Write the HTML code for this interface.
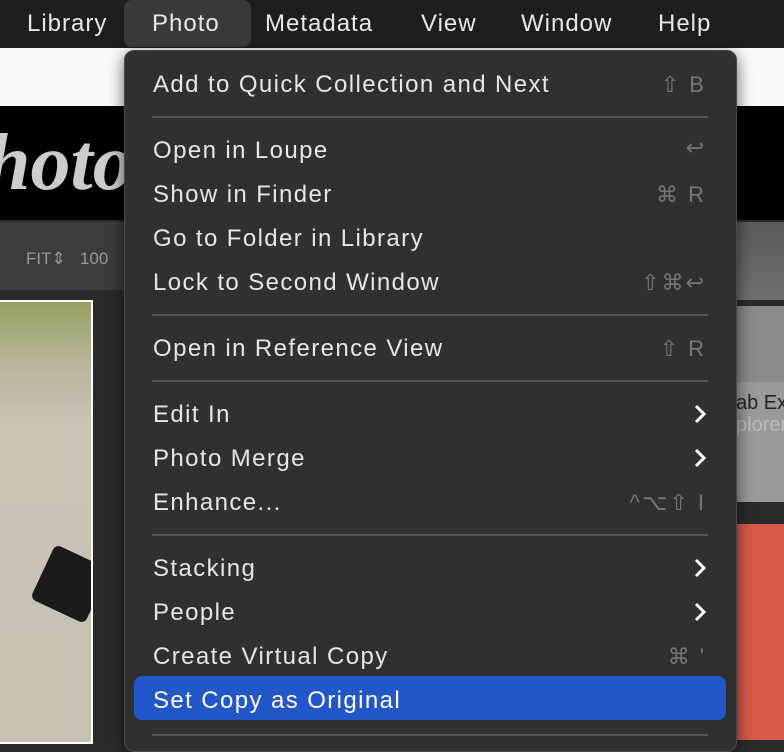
<!DOCTYPE html><html><head><style>
body{margin:0;width:784px;height:740px;overflow:hidden;background:#2b2b2b;font-family:"Liberation Sans",sans-serif;position:relative}
.a{position:absolute}
.mb{left:0;top:0;width:784px;height:48px;background:#1e1e1e;color:#e8e8e8;font-size:24px;letter-spacing:1px}
.mb span{position:absolute;top:10px}
.menu{left:124px;top:50px;width:611px;height:700px;background:#303030;border:1px solid #4a4a4a;border-radius:10px;box-shadow:0 4px 16px rgba(0,0,0,.6)}
.it{position:absolute;left:28px;font-size:24px;color:#e6e6e6;letter-spacing:1.4px;white-space:nowrap}
.sc{position:absolute;right:30px;font-size:22px;color:#777;letter-spacing:2px}
.ar{position:absolute;right:30px;width:12px;height:20px}
.sep{position:absolute;left:27px;width:556px;height:2px;background:#555}
</style></head><body>
<div class="a" style="left:0;top:48px;width:784px;height:58px;background:#fafafa"></div>
<div class="a" style="left:0;top:106px;width:784px;height:114px;background:#000"></div>
<div class="a" style="left:-14px;top:118px;font-family:'Liberation Serif',serif;font-style:italic;font-weight:bold;font-size:80px;color:#ccc">hotog</div>
<div class="a" style="left:0;top:222px;width:784px;height:68px;background:#3c3c3c"></div>
<div class="a" style="left:26px;top:249px;font-size:17px;color:#999">FIT&#8661; &nbsp; 100</div>
<div class="a" style="left:0;top:290px;width:784px;height:450px;background:#2a2a2a"></div>
<div class="a" style="left:0;top:300px;width:91px;height:440px;background:linear-gradient(#9aa060 0,#b8b49a 60px,#c9c3b6 120px,#c8c2b5 100%);border:2px solid #fff;border-left:none;overflow:hidden"><div class="a" style="left:40px;top:252px;width:60px;height:60px;background:#1a1a1a;border-radius:6px;transform:rotate(25deg)"></div></div>
<div class="a" style="left:736px;top:222px;width:48px;height:78px;background:linear-gradient(#5a5a5a,#707070)"></div>
<div class="a" style="left:736px;top:306px;width:48px;height:76px;background:#8a8a8a"></div>
<div class="a" style="left:736px;top:382px;width:48px;height:110px;background:#9a9a9a;font-size:20px;color:#222;line-height:22px;padding-top:10px;overflow:hidden;white-space:nowrap">ab Exp<br><span style="color:#bbb">plorer</span></div>
<div class="a" style="left:736px;top:524px;width:48px;height:216px;background:#d85a4a"></div>
<div class="a mb">
<div class="a" style="left:124px;top:0;width:127px;height:47px;background:#3a3a3a;border-radius:8px"></div>
<span style="left:27px">Library</span><span style="left:152px">Photo</span><span style="left:265px">Metadata</span><span style="left:421px">View</span><span style="left:521px">Window</span><span style="left:658px">Help</span>
</div>
<div class="a menu">
<div class="it" style="top:20px">Add to Quick Collection and Next</div><div class="sc" style="top:21px">⇧ B</div>
<div class="sep" style="top:65px"></div>
<div class="it" style="top:86px">Open in Loupe</div><div class="sc" style="top:84px">↩</div>
<div class="it" style="top:130px">Show in Finder</div><div class="sc" style="top:131px">⌘ R</div>
<div class="it" style="top:174px">Go to Folder in Library</div>
<div class="it" style="top:218px">Lock to Second Window</div><div class="sc" style="top:219px">⇧⌘↩</div>
<div class="sep" style="top:263px"></div>
<div class="it" style="top:284px">Open in Reference View</div><div class="sc" style="top:285px">⇧ R</div>
<div class="sep" style="top:329px"></div>
<div class="it" style="top:350px">Edit In</div><svg class="ar" style="top:353px" viewBox="0 0 12 20"><path d="M2 2l8 8-8 8" fill="none" stroke="#fff" stroke-width="3"/></svg>
<div class="it" style="top:394px">Photo Merge</div><svg class="ar" style="top:397px" viewBox="0 0 12 20"><path d="M2 2l8 8-8 8" fill="none" stroke="#fff" stroke-width="3"/></svg>
<div class="it" style="top:438px">Enhance...</div><div class="sc" style="top:439px">^⌥⇧ I</div>
<div class="sep" style="top:483px"></div>
<div class="it" style="top:504px">Stacking</div><svg class="ar" style="top:507px" viewBox="0 0 12 20"><path d="M2 2l8 8-8 8" fill="none" stroke="#fff" stroke-width="3"/></svg>
<div class="it" style="top:548px">People</div><svg class="ar" style="top:551px" viewBox="0 0 12 20"><path d="M2 2l8 8-8 8" fill="none" stroke="#fff" stroke-width="3"/></svg>
<div class="it" style="top:592px">Create Virtual Copy</div><div class="sc" style="top:593px">⌘ '</div>
<div class="a" style="left:9px;top:625px;width:592px;height:44px;background:#2356c8;border-radius:8px"></div>
<div class="it" style="top:636px;color:#fff">Set Copy as Original</div>
<div class="sep" style="top:683px"></div>
</div>
</body></html>
